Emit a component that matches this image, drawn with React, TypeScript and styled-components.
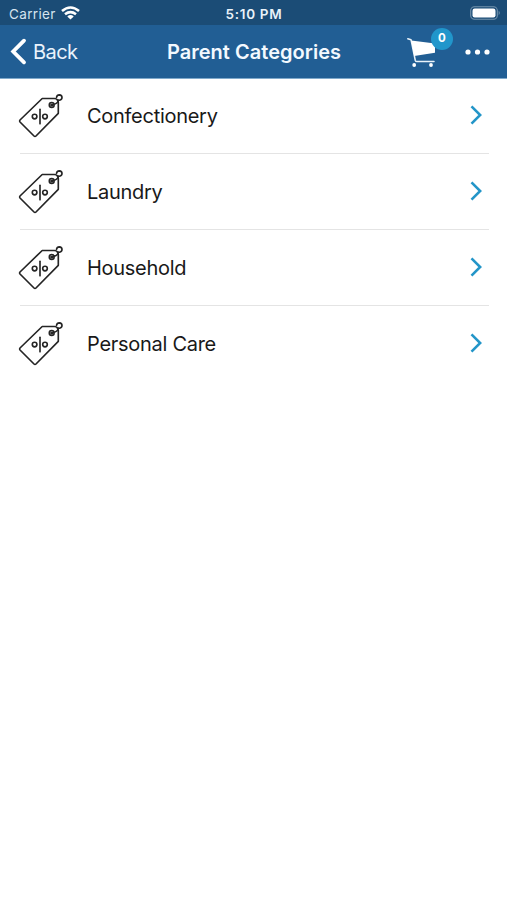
import React from 'react';
import styled, { createGlobalStyle } from 'styled-components';

const GlobalStyle = createGlobalStyle`
  * { box-sizing: border-box; }
  body { margin: 0; background: #fff; font-family: Inter, "Liberation Sans", sans-serif; }
`;

const Screen = styled.main`
  width: 100%;
  min-height: 900px;
  background: #fff;
`;

const StatusBar = styled.div`
  display: grid;
  grid-template-columns: 1fr auto 1fr;
  align-items: center;
  height: 25px;
  padding: 2px 6px 0 9px;
  background: #1b4c76;
  color: #e9f2f9;
  font-size: 13.5px;
  line-height: 22px;
`;

const Carrier = styled.span`
  display: flex;
  align-items: center;
  gap: 5px;
  letter-spacing: 0.35px;
  color: #d5e4ef;

  svg { margin-bottom: 2px; }
`;

const Clock = styled.span`
  margin-right: 2px;
  font-weight: 600;
  letter-spacing: 0.7px;
`;

const BatterySlot = styled.span`
  display: flex;
  justify-content: flex-end;
  margin-bottom: 1px;
`;

const NavBar = styled.header`
  display: grid;
  grid-template-columns: 1fr auto 1fr;
  align-items: center;
  height: 54px;
  padding: 0 17px 0 10px;
  background: #215e94;
  border-bottom: 1px solid #7fa9cb;
  color: #fff;
`;

const BackButton = styled.button`
  display: flex;
  align-items: center;
  gap: 6px;
  padding: 0;
  border: 0;
  background: none;
  color: #e9f3fc;
  font: 400 20px/24px Inter, sans-serif;
  letter-spacing: -0.55px;
`;

const Title = styled.h1`
  margin: 0 0 0 8px;
  color: #f3f9ff;
  font-size: 20px;
  font-weight: 600;
  line-height: 24px;
  letter-spacing: 0.03px;
`;

const Actions = styled.div`
  display: flex;
  align-items: center;
  justify-content: flex-end;
  gap: 28px;
`;

const CartButton = styled.span`
  position: relative;
  display: flex;
`;

const Badge = styled.span`
  position: absolute;
  top: -9px;
  left: 24px;
  width: 22px;
  height: 22px;
  border-radius: 50%;
  background: #2196cb;
  font-size: 11.5px;
  font-weight: 700;
  line-height: 21px;
  text-align: center;
`;

const List = styled.ul`
  margin: 0;
  padding: 0 18px 0 20px;
  list-style: none;
`;

const Row = styled.li`
  display: flex;
  align-items: center;
  height: 76.2px;
  padding-right: 7px;
  border-bottom: 1px solid #e4e4e4;

  &:first-child { height: 75px; }
  &:last-child { border-bottom: 0; }
`;

const TagSvg = styled.svg`
  flex: none;
  margin: 0 21px 0 -4px;
`;

const ChevronSvg = styled.svg`
  flex: none;
  margin-bottom: 2px;
`;

const Label = styled.span`
  flex: 1;
  color: #191919;
  font-size: 20px;
  line-height: 26px;
  letter-spacing: -0.28px;
`;

const TagIcon = () => (
  <TagSvg width="50" height="50" viewBox="0 0 50 50" fill="none" stroke="#252525" strokeWidth="1.65" strokeLinejoin="round" strokeLinecap="round">
    <path d="M26.2 7.5H38.5Q42.3 7.8 42.3 11.5V22.3L20 45Q19 46 18 45L4 31Q3.2 30 4 29Z" />
    <circle cx="35.7" cy="13.9" r="2.4" />
    <circle cx="35.7" cy="13.9" r=".7" />
    <path d="M36.5 13.5Q41.5 13 42.3 9.3" />
    <path d="M40.5 6.3Q41 3.9 43.3 3.9Q46 4.1 46 6.5Q46 8.6 43.5 9.2H41.5" />
    <path d="M24 18.2V32.8" />
    <circle cx="18.6" cy="25.5" r="2.3" />
    <circle cx="29" cy="25.5" r="2.3" />
  </TagSvg>
);

const categories = ['Confectionery', 'Laundry', 'Household', 'Personal Care'];

export default function App() {
  return (
    <Screen>
      <GlobalStyle />
      <StatusBar>
        <Carrier>
          Carrier
          <svg width="19" height="14" viewBox="0 0 19 14" fill="none" stroke="#fff" strokeWidth="2.6">
            <path d="M1 5Q9.5-2 18 5" />
            <path d="M4 8.3Q9.5 4 15 8.3" />
            <path d="M6.3 10.4Q9.5 7.8 12.7 10.4L9.5 13.6Z" fill="#fff" stroke="none" />
          </svg>
        </Carrier>
        <Clock>5:10 PM</Clock>
        <BatterySlot>
          <svg width="31" height="14" viewBox="0 0 31 14">
            <rect x=".7" y=".7" width="26.6" height="12.6" rx="3.8" fill="none" stroke="#7393ad" strokeWidth="1.1" />
            <rect x="2.5" y="2.5" width="23" height="9" rx="2.2" fill="#fff" />
            <path d="M28.7 4.8Q30.8 7 28.7 9.2Z" fill="#7393ad" />
          </svg>
        </BatterySlot>
      </StatusBar>
      <NavBar>
        <BackButton>
          <svg width="17" height="27" viewBox="0 0 17 27" fill="none" stroke="#fff" strokeWidth="3.8" strokeLinecap="round">
            <path d="M14 2.7L3.2 13.5L14 24.3" />
          </svg>
          Back
        </BackButton>
        <Title>Parent Categories</Title>
        <Actions>
          <CartButton>
            <svg width="30" height="30" viewBox="0 0 30 30" fill="none">
              <path d="M.8 1.7L4 2.7L8.3 23.5Q8.6 24.6 10 24.6H27" stroke="#e9f3fa" strokeWidth="1.5" strokeLinecap="round" strokeLinejoin="round" />
              <path d="M4.2 3.5L28 6.5V15.7L7.2 19Z" fill="#fff" />
              <circle cx="7.2" cy="28" r="1.9" fill="#fff" />
              <circle cx="24" cy="28" r="1.9" fill="#fff" />
            </svg>
            <Badge>0</Badge>
          </CartButton>
          <svg width="25" height="6" viewBox="0 0 25 6" fill="#fff">
            <circle cx="3" cy="3" r="2.6" />
            <circle cx="12.5" cy="3" r="2.6" />
            <circle cx="22" cy="3" r="2.6" />
          </svg>
        </Actions>
      </NavBar>
      <List>
        {categories.map((name) => (
          <Row key={name}>
            <TagIcon />
            <Label>{name}</Label>
            <ChevronSvg width="12" height="20" viewBox="0 0 12 20" fill="none" stroke="#2395c8" strokeWidth="2.6">
              <path d="M1.5 1.3L10.2 10L1.5 18.7" />
            </ChevronSvg>
          </Row>
        ))}
      </List>
    </Screen>
  );
}
